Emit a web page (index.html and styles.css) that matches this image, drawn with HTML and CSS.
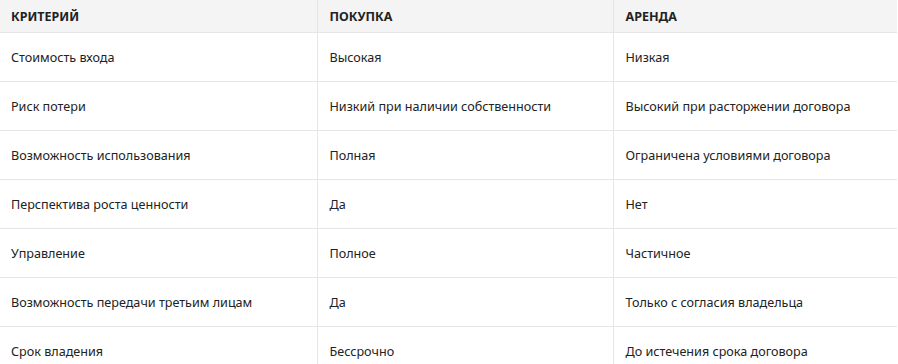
FILE: index.html
```html
<!DOCTYPE html>
<html lang="ru">
<head>
<meta charset="utf-8">
<link rel="stylesheet" href="styles.css">
</head>
<body>
<table class="cmp">
  <colgroup><col class="c1"><col class="c2"><col class="c3"></colgroup>
  <thead>
    <tr><th>КРИТЕРИЙ</th><th>ПОКУПКА</th><th>АРЕНДА</th></tr>
  </thead>
  <tbody>
    <tr><td>Стоимость входа</td><td>Высокая</td><td>Низкая</td></tr>
    <tr><td>Риск потери</td><td>Низкий при наличии собственности</td><td>Высокий при расторжении договора</td></tr>
    <tr><td>Возможность использования</td><td>Полная</td><td>Ограничена условиями договора</td></tr>
    <tr><td>Перспектива роста ценности</td><td>Да</td><td>Нет</td></tr>
    <tr><td>Управление</td><td>Полное</td><td>Частичное</td></tr>
    <tr><td>Возможность передачи третьим лицам</td><td>Да</td><td>Только с согласия владельца</td></tr>
    <tr><td>Срок владения</td><td>Бессрочно</td><td>До истечения срока договора</td></tr>
  </tbody>
</table>
</body>
</html>
```
FILE: styles.css
```css
html, body { margin: 0; padding: 0; background: #fff; }
body { font-family: "Noto Sans", "Open Sans", sans-serif; color: #222; }
.cmp { border-collapse: collapse; table-layout: fixed; width: 897px; font-size: 12.6px; }
.c1 { width: 317px; }
.c2 { width: 296px; }
.c3 { width: 284px; }
.cmp th, .cmp td { text-align: left; padding: 0 12px; border-bottom: 1px solid #e6e6e6; border-left: 1px solid #e6e6e6; }
.cmp th:first-child, .cmp td:first-child { border-left: none; padding-left: 11px; }
.cmp th { background: #f4f4f4; height: 32px; font-weight: 700; font-size: 12.5px; }
.cmp td { height: 48px; }
```
